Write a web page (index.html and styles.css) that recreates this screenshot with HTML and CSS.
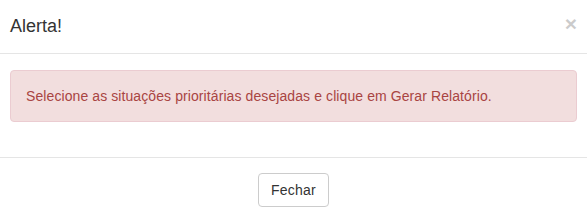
FILE: index.html
```html
<!DOCTYPE html>
<html lang="pt-BR">
<head>
  <meta charset="UTF-8" />
  <title>Alerta</title>
  <link rel="stylesheet" href="styles.css">
</head>
<body>

<div class="modal-content">
  <div class="modal-header">
    <button type="button" class="close">&times;</button>
    <h4 class="modal-title">Alerta!</h4>
  </div>
  <div class="modal-body">
    <div class="alert alert-danger">Selecione as situações prioritárias desejadas e clique em Gerar Relatório.</div>
  </div>
  <div class="modal-footer">
    <button type="button" class="btn btn-default">Fechar</button>
  </div>
</div>

</body>
</html>
```

FILE: styles.css
```css
* {
  box-sizing: border-box;
}
body {
  margin: 0;
  font-family: "Liberation Sans", Arial, sans-serif;
  font-size: 14px;
  line-height: 20px;
  color: #333;
  background: #fff;
}
.modal-content {
  width: 587px;
  background: #fff;
}
.modal-header {
  padding: 15px 10px;
  border-bottom: 1px solid #e5e5e5;
}
.modal-title {
  margin: 0;
  font-size: 18px;
  font-weight: normal;
  line-height: 23px;
  color: #333;
}
.close {
  float: right;
  padding: 0;
  margin-top: -2px;
  background: transparent;
  border: 0;
  font-family: "Liberation Sans", Arial, sans-serif;
  font-size: 21px;
  font-weight: bold;
  line-height: 1;
  color: #000;
  opacity: .2;
  cursor: pointer;
}
.modal-body {
  padding: 16px 10px 15px;
}
.alert {
  padding: 15px;
  margin-bottom: 20px;
  border: 1px solid transparent;
  border-radius: 4px;
  letter-spacing: 0.09px;
}
.alert-danger {
  color: #a94442;
  background-color: #f2dede;
  border-color: #ebccd1;
}
.modal-footer {
  padding: 15px;
  text-align: center;
  border-top: 1px solid #e5e5e5;
}
.btn {
  display: inline-block;
  padding: 6px 12px;
  font-family: inherit;
  font-size: 14px;
  line-height: 20px;
  letter-spacing: 0.2px;
  border: 1px solid transparent;
  border-radius: 4px;
  cursor: pointer;
}
.btn-default {
  color: #333;
  background-color: #fff;
  border-color: #ccc;
}
```
